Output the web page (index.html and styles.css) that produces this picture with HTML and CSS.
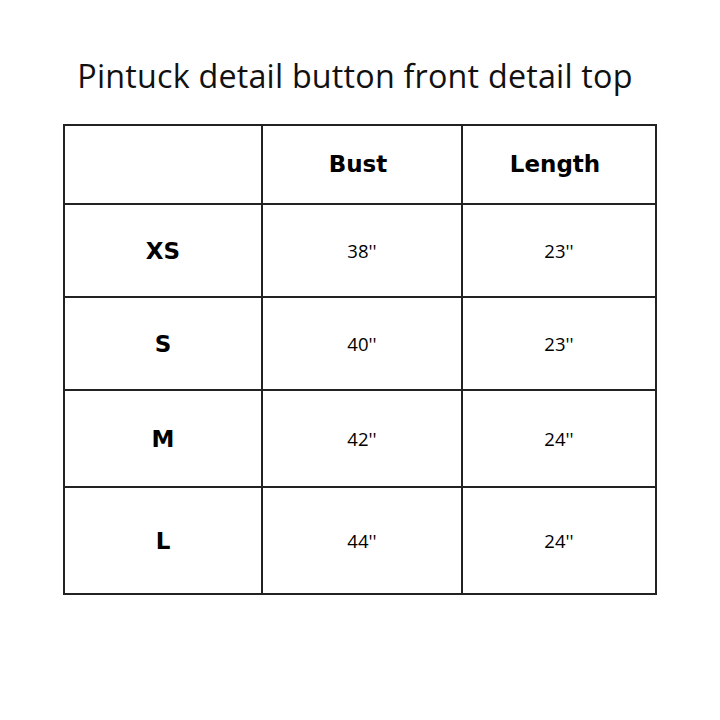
FILE: index.html
```html
<!DOCTYPE html>
<html>
<head>
<meta charset="utf-8">
<link rel="stylesheet" href="styles.css">
</head>
<body>
<div class="page">
  <h1 class="title">Pintuck detail button front detail top</h1>
  <table class="chart">
    <colgroup>
      <col class="c1"><col class="c2"><col class="c3">
    </colgroup>
    <tr class="r0"><td></td><th>Bust</th><th>Length</th></tr>
    <tr class="r1"><th>XS</th><td>38''</td><td>23''</td></tr>
    <tr class="r2"><th>S</th><td>40''</td><td>23''</td></tr>
    <tr class="r3"><th>M</th><td>42''</td><td>24''</td></tr>
    <tr class="r4"><th>L</th><td>44''</td><td>24''</td></tr>
  </table>
</div>
</body>
</html>
```

FILE: styles.css
```css
html, body {
  margin: 0;
  padding: 0;
  background: #fff;
}
.page {
  width: 720px;
  height: 720px;
  display: flex;
  flex-direction: column;
  align-items: center;
}
.title {
  margin: 51px 10px 0 0;
  font-family: "Open Sans", "Liberation Sans", sans-serif;
  font-weight: 400;
  font-size: 32.3px;
  line-height: 48px;
  color: #111;
  letter-spacing: 0.2px;
}
.chart {
  margin-top: 25px;
  border-collapse: collapse;
  width: 592px;
  table-layout: fixed;
  border: 2px solid #222;
}
.chart td, .chart th {
  border: 2px solid #222;
  text-align: center;
  vertical-align: middle;
  padding: 0;
  color: #000;
}
.c1 { width: 198px; }
.c2 { width: 200px; }
.c3 { width: 194px; }
.chart th {
  font-family: "DejaVu Sans", "Liberation Sans", sans-serif;
  font-weight: 700;
  font-size: 23px;
}
.chart td {
  font-family: "Open Sans", "Liberation Sans", sans-serif;
  font-weight: 400;
  font-size: 18.5px;
}
.r0 { height: 79px; }
.r0 th { font-size: 23px; padding: 0 8px 2px 0; }
.r1 { height: 93px; }
.r2 { height: 93px; }
.r3 { height: 97px; }
.r4 { height: 107px; }
```
